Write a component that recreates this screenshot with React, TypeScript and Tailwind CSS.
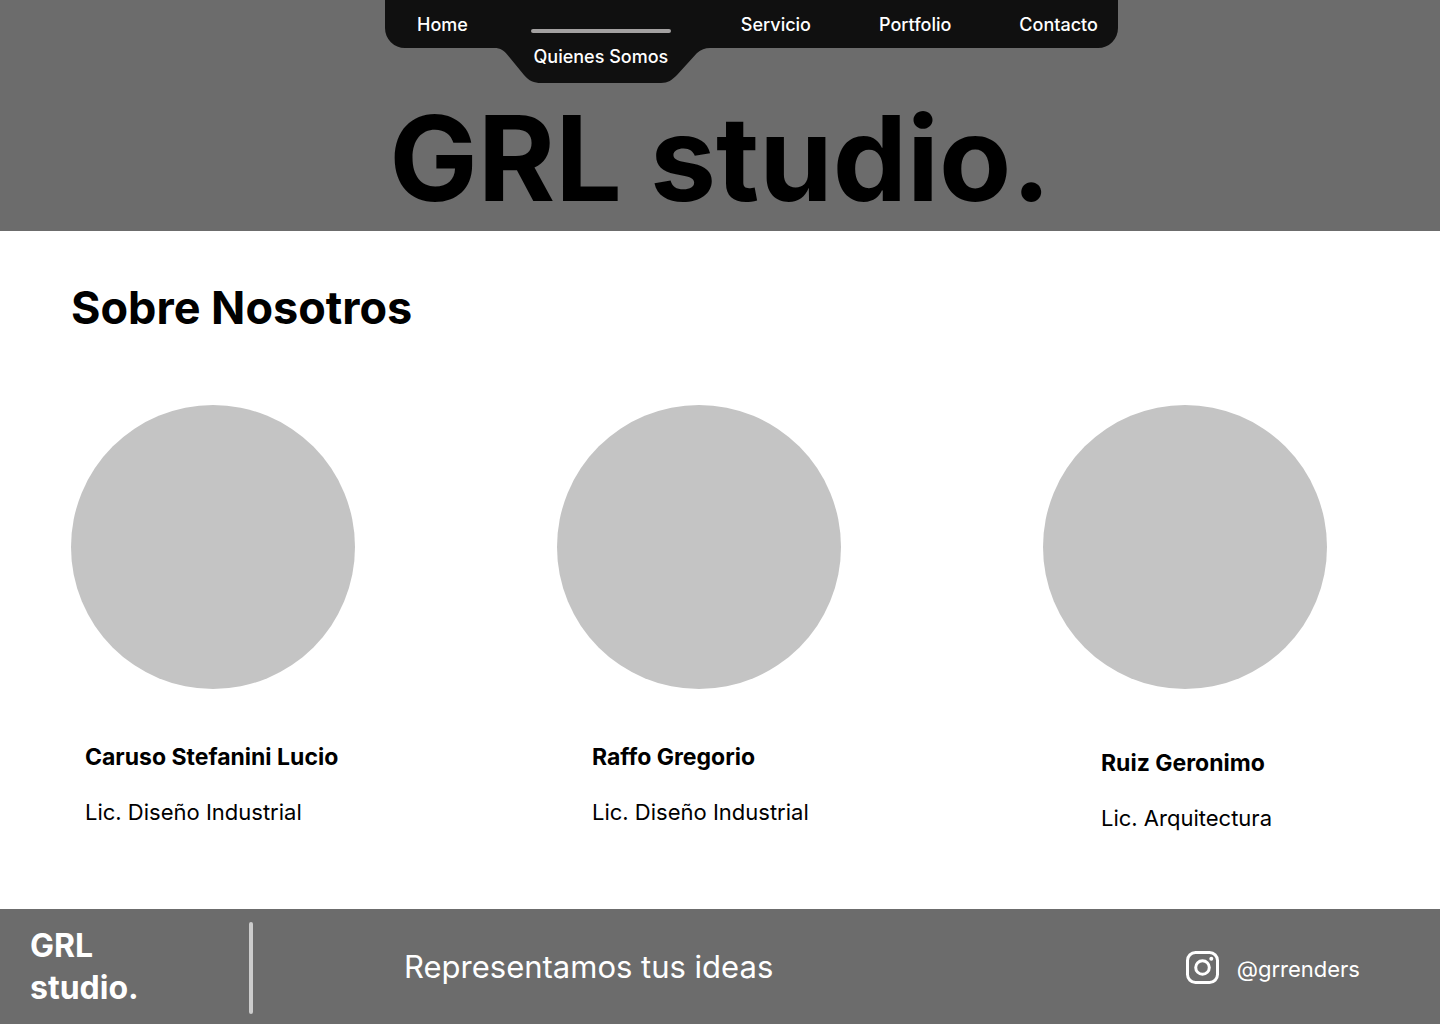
const links = [
  { label: 'Home', place: 'ml-8' },
  { label: 'Quienes Somos', place: 'ml-[63px]', active: true },
  { label: 'Servicio', place: 'ml-[70px]' },
  { label: 'Portfolio', place: 'ml-[68px]' },
  { label: 'Contacto', place: 'ml-[68px]' },
];

const team = [
  { name: 'Caruso Stefanini Lucio', role: 'Lic. Diseño Industrial', place: 'mt-12 pl-3.5' },
  { name: 'Raffo Gregorio', role: 'Lic. Diseño Industrial', place: 'mt-12 pl-[35px]' },
  { name: 'Ruiz Geronimo', role: 'Lic. Arquitectura', place: 'mt-[54px] pl-[58px]' },
];

function NavShape() {
  return (
    <svg className="absolute inset-0 -z-10" width="733" height="83" viewBox="0 0 733 83" aria-hidden="true">
      <path
        fill="#101010"
        d="M0 0H733V28A20 20 0 0 1 713 48H325C320 48 316 49.500 312 53L292 75C287 80 283 83 276 83H156C149 83 144 81 139 75L123 55.500C119 50.500 116 48 109 48H20A20 20 0 0 1 0 28Z"
      />
    </svg>
  );
}

function InstagramIcon() {
  return (
    <svg width="33" height="33" viewBox="0 0 33 33" fill="none" aria-hidden="true">
      <rect x="1.5" y="1.5" width="30" height="30" rx="8" stroke="white" strokeWidth="3" />
      <circle cx="16.5" cy="16.5" r="6.8" stroke="white" strokeWidth="3" />
      <circle cx="25.3" cy="7.7" r="2" fill="white" />
    </svg>
  );
}

export default function App() {
  return (
    <div className="flex min-h-screen flex-col bg-white font-['Inter',sans-serif] text-black">
      <header className="flex flex-col items-center bg-[#6c6c6c] pb-[5px]">
        <nav className="relative isolate ml-[63px] flex h-[83px] w-[733px] items-start text-lg leading-6 font-medium text-white" aria-label="Principal">
          <NavShape />
          {links.map((link) =>
            link.active ? (
              <a key={link.label} href="#quienes-somos" aria-current="page" className="flex w-[140px] flex-col items-center pt-[29px] whitespace-nowrap ml-[63px]">
                <span className="mb-3 h-1 w-full rounded-full bg-[#a3a1a1]" />
                {link.label}
              </a>
            ) : (
              <a key={link.label} href="#" className={`${link.place} pt-[13px]`}>
                {link.label}
              </a>
            ),
          )}
        </nav>
        <h1 className="mt-2 text-[118px] leading-[135px] font-bold">GRL studio.</h1>
      </header>

      <main className="flex-1 pt-12 pr-[113px] pb-12 pl-[71px]">
        <h2 className="text-[45px] leading-[58px] font-bold">Sobre Nosotros</h2>
        <ul className="mt-[68px] flex justify-between">
          {team.map((member) => (
            <li key={member.name} className="w-[284px] whitespace-nowrap">
              <div className="size-[284px] rounded-full bg-[#c4c4c4]" />
              <div className={member.place}>
                <h3 className="text-[23px] leading-10 font-bold">{member.name}</h3>
                <p className="mt-[15px] text-[22px] leading-10">{member.role}</p>
              </div>
            </li>
          ))}
        </ul>
      </main>

      <footer className="flex h-[115px] items-center bg-[#6c6c6c] pr-20 text-white">
        <p className="ml-[30px] w-[219px] text-[32px] leading-[42px] font-bold">
          GRL
          <br />
          studio.
        </p>
        <span className="mt-0.5 h-[92px] w-1 rounded-full bg-[#cccccc]" />
        <p className="ml-[151px] text-[31px] leading-[42px]">Representamos tus ideas</p>
        <a href="#instagram" className="mt-0.5 ml-auto flex items-end gap-[18px] text-[22px] leading-[30px]">
          <InstagramIcon />
          @grrenders
        </a>
      </footer>
    </div>
  );
}
